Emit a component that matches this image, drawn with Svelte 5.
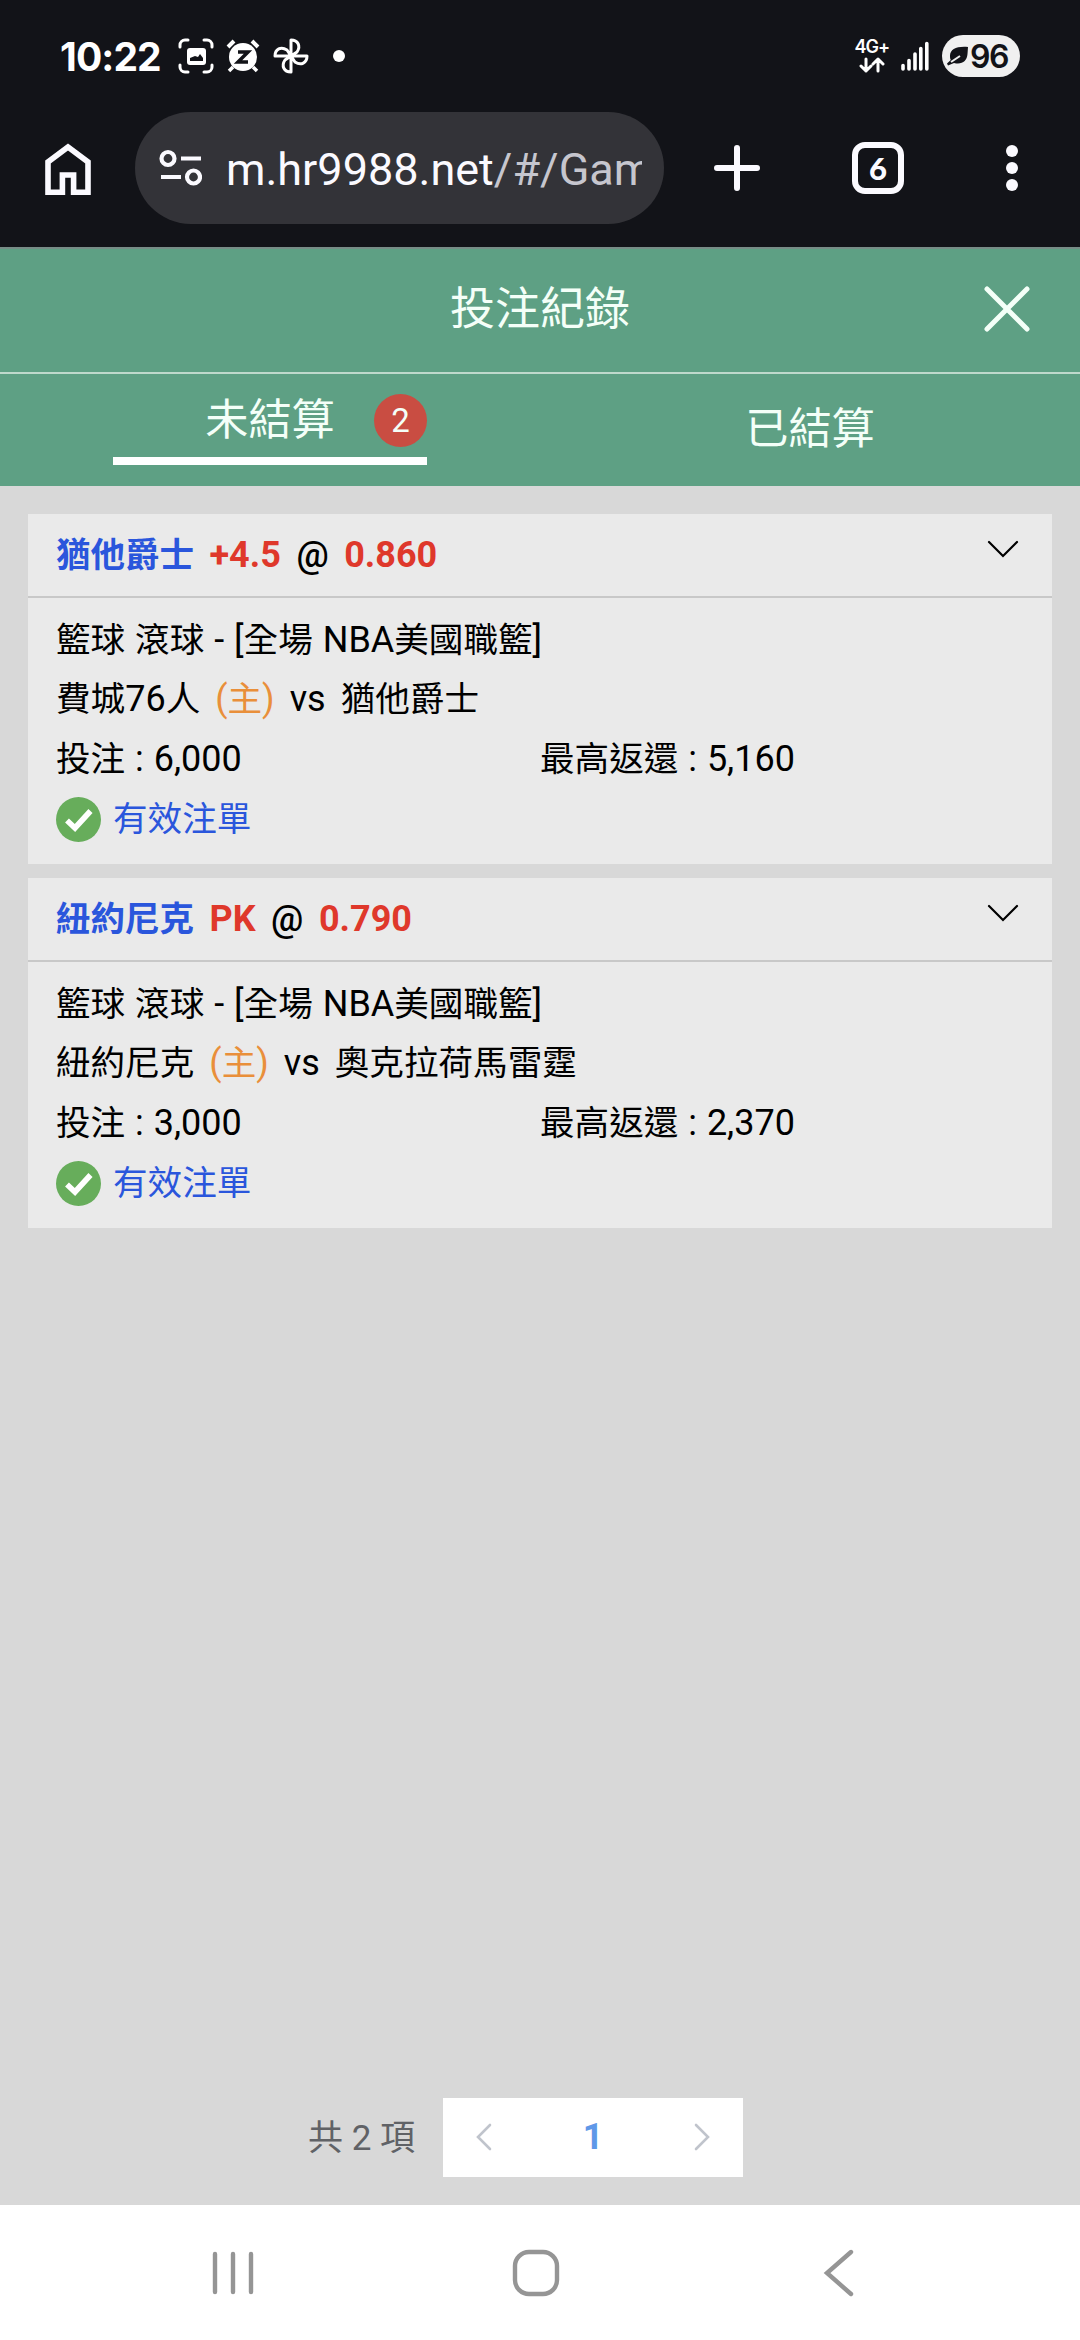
<script lang="ts">
interface Bet {
  id: number;
  pick: string;
  handicap: string;
  odds: string;
  category: string;
  home: string;
  away: string;
  stake: number;
  maxReturn: number;
}

const bets: Bet[] = [
  {
    id: 1,
    pick: '猶他爵士',
    handicap: '+4.5',
    odds: '0.860',
    category: '籃球 滾球 - [全場 NBA美國職籃]',
    home: '費城76人',
    away: '猶他爵士',
    stake: 6000,
    maxReturn: 5160,
  },
  {
    id: 2,
    pick: '紐約尼克',
    handicap: 'PK',
    odds: '0.790',
    category: '籃球 滾球 - [全場 NBA美國職籃]',
    home: '紐約尼克',
    away: '奧克拉荷馬雷霆',
    stake: 3000,
    maxReturn: 2370,
  },
];

let activeTab = $state('open');
let collapsed = $state<number[]>([]);

function toggle(id: number) {
  collapsed = collapsed.includes(id) ? collapsed.filter((c) => c !== id) : [...collapsed, id];
}

function money(value: number): string {
  return value.toLocaleString('en-US');
}

// Han and Latin runs are set at slightly different sizes
function runs(text: string): string[] {
  return text.match(/[\u4e00-\u9fff]+|[^\u4e00-\u9fff]+/g) ?? [];
}
</script>

{#snippet mixed(text: string)}
  <span class="mixed">{#each runs(text) as run}<span class:han={/[\u4e00-\u9fff]/.test(run)}>{run}</span>{/each}</span>
{/snippet}

<div class="screen">
  <div class="status-bar">
    <span class="clock">10:22</span>
    <svg class="capture" width="36" height="36" viewBox="0 0 36 36" fill="none" stroke="#fff" stroke-width="3" stroke-linecap="round">
      <path d="M2 9V7a5 5 0 0 1 5-5h3M26 2h3a5 5 0 0 1 5 5v2M34 27v2a5 5 0 0 1-5 5h-3M10 34H7a5 5 0 0 1-5-5v-2" />
      <rect x="9" y="10" width="19" height="17" rx="3" fill="#fff" stroke="none" />
      <path d="M12 23v-3l5-2 3 1 2-3 3 4v3z" fill="#121318" stroke="none" />
    </svg>
    <svg class="alarm" width="34" height="34" viewBox="0 0 34 34" fill="none" stroke="#fff">
      <circle cx="17" cy="18" r="14" fill="#fff" stroke="none" />
      <path d="M2 8l6-6M26 2l6 6" stroke-width="4" />
      <path d="M7 28l-4 4M27 28l4 4" stroke-width="3.5" />
      <path d="M12 13h10l-10 10h10" stroke="#121318" stroke-width="3.5" />
    </svg>
    <svg class="fan" width="36" height="36" viewBox="0 0 36 36" fill="none" stroke="#fff" stroke-width="3" stroke-linejoin="round">
      <path d="M18 18V2c7 0 10 6 6 12zM18 18h16c0 7-6 10-12 6zM18 18v16c-7 0-10-6-6-12zM18 18H2c0-7 6-10 12-6z" />
    </svg>
    <span class="more-dot"></span>
    <span class="spacer"></span>
    <div class="network">
      <span>4G+</span>
      <svg width="26" height="16" viewBox="0 0 26 16" fill="none" stroke="#fff" stroke-width="3" stroke-linecap="round" stroke-linejoin="round">
        <path d="M7 2v12M2 9l5 5 5-5M19 14V2M14 7l5-5 5 5" />
      </svg>
    </div>
    <svg class="signal" width="28" height="30" viewBox="0 0 28 30" stroke="#fff" stroke-width="3.6" stroke-linecap="round">
      <path d="M2 24.500v3.500M8 19.500v8.500M14 13v15M19.800 7.500v20.500M25.800 2.500v25.500" />
    </svg>
    <div class="battery">
      <svg width="23" height="20" viewBox="0 0 23 20">
        <path d="M22 1C11 0 4 3 4 10c0 2 .3 3 .8 4L1 17.500l1 2 6-2.500c8 2 13-2 13.500-9z" fill="#121318" />
        <path d="M5 16l9-6" stroke="#f0f0f0" stroke-width="2" />
      </svg>
      <span>96</span>
    </div>
  </div>

  <div class="browser-bar">
    <svg class="home" width="46" height="52" viewBox="0 0 46 52" fill="none" stroke="#fbfaff" stroke-width="5.600">
      <path d="M3 49.200V19L23 4l20 15v30.200H28.600V32H17.400v17.200z" />
    </svg>
    <div class="address">
      <svg width="43" height="38" viewBox="0 0 43 38" fill="none" stroke="#fbfaff" stroke-width="4.200">
        <circle cx="9" cy="9.500" r="6.500" />
        <circle cx="34.500" cy="28" r="6.500" />
        <path d="M22 9.500h20M2 28h20" />
      </svg>
      <div class="url">m.hr9988.net<span>/#/Gam</span></div>
    </div>
    <svg class="plus" width="46" height="46" viewBox="0 0 46 46" stroke="#fbfaff" stroke-width="6" stroke-linecap="round">
      <path d="M23 3v40M3 23h40" />
    </svg>
    <div class="tab-count">6</div>
    <svg class="menu" width="12" height="48" viewBox="0 0 12 48" fill="#fbfaff">
      <circle cx="6" cy="7" r="6" />
      <circle cx="6" cy="24" r="6" />
      <circle cx="6" cy="41" r="6" />
    </svg>
  </div>

  <header class="title-bar">
    <h1>投注紀錄</h1>
    <button class="close" aria-label="close">
      <svg width="46" height="46" viewBox="0 0 46 46" stroke="#f4fff8" stroke-width="5" stroke-linecap="round">
        <path d="M3 3l40 40M43 3L3 43" />
      </svg>
    </button>
  </header>

  <nav class="tabs">
    <button class="tab" class:active={activeTab === 'open'} onclick={() => (activeTab = 'open')}>
      <span class="label">未結算<span class="badge">{bets.length}</span></span>
    </button>
    <button class="tab" class:active={activeTab === 'settled'} onclick={() => (activeTab = 'settled')}>
      <span class="label">已結算</span>
    </button>
  </nav>

  <main>
    {#each bets as bet (bet.id)}
      <section class="card">
        <button class="card-head" onclick={() => toggle(bet.id)}>
          <span class="pick">{bet.pick}</span>
          <span class="red">{bet.handicap}</span>
          <span class="at">@</span>
          <span class="red">{bet.odds}</span>
          <svg width="32" height="18" viewBox="0 0 32 18" fill="none" stroke="#000" stroke-width="2.200" stroke-linecap="round">
            <path d="M2 2l14 14L30 2" />
          </svg>
        </button>
        {#if !collapsed.includes(bet.id)}
          <div class="card-body">
            <div class="row">{@render mixed(bet.category)}</div>
            <div class="row teams">
              {@render mixed(bet.home)}
              <span class="host">{@render mixed('(主)')}</span>
              {@render mixed('vs')}
              {@render mixed(bet.away)}
            </div>
            <div class="row amounts">
              {@render mixed(`投注 : ${money(bet.stake)}`)}
              {@render mixed(`最高返還 : ${money(bet.maxReturn)}`)}
            </div>
            <div class="row valid">
              <svg width="45" height="45" viewBox="0 0 45 45" fill="none">
                <circle cx="22.500" cy="22.500" r="22.500" fill="#67ad5b" />
                <path d="M11 23.500l8 7.500 15.500-17" stroke="#fff" stroke-width="5.600" />
              </svg>
              {@render mixed('有效注單')}
            </div>
          </div>
        {/if}
      </section>
    {/each}
  </main>

  <footer class="pagination">
    <span class="total">共 {bets.length} 項</span>
    <div class="pager">
      <svg width="16" height="28" viewBox="0 0 16 28"><path d="M14 2L2 14l12 12" /></svg>
      <span>1</span>
      <svg width="16" height="28" viewBox="0 0 16 28"><path d="M2 2l12 12L2 26" /></svg>
    </div>
  </footer>

  <div class="system-nav">
    <svg width="42" height="46" viewBox="0 0 42 46"><path d="M3 4v38M21 4v38M39 4v38" /></svg>
    <svg width="48" height="48" viewBox="0 0 48 48"><rect x="3" y="3" width="42" height="42" rx="14" /></svg>
    <svg width="36" height="48" viewBox="0 0 36 48"><path d="M33 3L9 24l24 21" /></svg>
  </div>
</div>

<style>
  :global(body) {
    background: #d8d8d8;
  }

  .screen {
    display: flex;
    flex-direction: column;
    width: 1080px;
    height: 2340px;
    overflow: hidden;
    background: #d8d8d8;
    color: #000;
    font-family: Roboto, 'Noto Sans CJK TC', sans-serif;
    font-size: 36px;
  }

  svg {
    display: block;
    flex: none;
  }

  button {
    padding: 0;
    border: none;
    background: none;
    color: inherit;
    font: inherit;
    cursor: pointer;
  }

  .status-bar {
    display: flex;
    align-items: center;
    height: 112px;
    padding: 0 60px;
    background: #121318;
    color: #fff;
    box-sizing: border-box;
  }

  .clock {
    width: 118px;
    font-family: Inter, sans-serif;
    font-size: 39px;
    font-weight: 700;
    letter-spacing: -0.9px;
    white-space: nowrap;
  }

  .alarm {
    margin-left: 12px;
  }

  .fan {
    margin-left: 13px;
  }

  .more-dot {
    width: 12px;
    height: 12px;
    margin-left: 24px;
    border-radius: 50%;
    background: #fff;
  }

  .spacer {
    flex: 1;
  }

  .network {
    display: flex;
    flex-direction: column;
    align-items: center;
    gap: 2px;
    margin-right: 12px;
    font-family: Inter, sans-serif;
    font-size: 18px;
    font-weight: 600;
    line-height: 16px;
    letter-spacing: -1px;
  }

  .battery {
    display: flex;
    align-items: center;
    gap: 1px;
    width: 78px;
    height: 42px;
    margin-left: 13px;
    padding-left: 4px;
    border-radius: 21px;
    background: #f0f0f0;
    color: #121318;
    font-family: Inter, sans-serif;
    font-size: 32px;
    font-weight: 600;
    letter-spacing: -1.5px;
    box-sizing: border-box;
  }

  .browser-bar {
    display: flex;
    align-items: flex-start;
    height: 135px;
    padding-left: 45px;
    background: #121318;
    box-sizing: border-box;
  }

  .home {
    margin-top: 31px;
  }

  .address {
    display: flex;
    align-items: center;
    width: 529px;
    height: 112px;
    margin-left: 44px;
    padding: 0 22px 0 24px;
    border-radius: 56px;
    background: #333338;
    box-sizing: border-box;
  }

  .url {
    flex: 1;
    margin-left: 24px;
    padding-top: 3px;
    overflow: hidden;
    color: #fbfaff;
    font-size: 45px;
    line-height: 60px;
    white-space: nowrap;
  }

  .url span {
    color: #c6c6ce;
  }

  .plus {
    margin: 33px 0 0 50px;
  }

  .tab-count {
    width: 52px;
    height: 52px;
    margin: 30px 0 0 92px;
    border: 6px solid #fbfaff;
    border-radius: 13px;
    color: #fbfaff;
    font-family: Lato, sans-serif;
    font-size: 31px;
    font-weight: 900;
    line-height: 40px;
    text-align: center;
    box-sizing: border-box;
  }

  .menu {
    margin: 32px 0 0 102px;
  }

  .title-bar {
    display: grid;
    grid-template-columns: 1fr auto 1fr;
    align-items: center;
    height: 127px;
    padding: 0 50px 4px;
    border-top: 2px solid #778c86;
    border-bottom: 2px solid #bfd9cc;
    background: #5ea084;
    color: #f4fff8;
    box-sizing: border-box;
  }

  h1 {
    grid-column: 2;
    margin: 0;
    padding-bottom: 6px;
    font-size: 45px;
    font-weight: 400;
  }

  .close {
    justify-self: end;
  }

  .tabs {
    display: flex;
    height: 112px;
    background: #5ea084;
    color: #f4fff8;
  }

  .tab {
    display: flex;
    flex: 1;
    align-items: center;
    justify-content: center;
    font-size: 43.2px;
  }

  .label {
    position: relative;
    width: 314px;
    line-height: 64px;
  }

  .active .label {
    margin-bottom: 6px;
    padding-bottom: 4px;
    border-bottom: 8px solid #fff;
  }

  .badge {
    position: absolute;
    top: 5px;
    right: 0;
    width: 53px;
    height: 53px;
    border-radius: 50%;
    background: #c94d42;
    font-size: 33px;
    line-height: 53px;
  }

  main {
    display: flex;
    flex: 1;
    flex-direction: column;
    gap: 14px;
    padding: 28px;
  }

  .card {
    background: #eaeaea;
  }

  .card-head {
    display: flex;
    align-items: center;
    gap: 15.5px;
    width: 100%;
    height: 84px;
    padding: 0 33px 1px 28px;
    border-bottom: 2px solid #c8c8c8;
    box-sizing: border-box;
  }

  .card-head svg {
    margin: -11px 0 0 auto;
  }

  .pick {
    padding-bottom: 5px;
    color: #2a56dc;
    font-size: 34.5px;
    font-weight: 700;
  }

  .red {
    color: #df382b;
    font-weight: 700;
  }

  .at {
    font-weight: 500;
  }

  .card-body {
    height: 266px;
    padding: 13px 28px 0;
    box-sizing: border-box;
  }

  .row {
    display: flex;
    align-items: center;
    height: 59.3px;
    line-height: 53px;
  }

  .mixed {
    white-space: pre;
    word-spacing: 1px;
  }

  .han {
    font-size: 34.6px;
  }

  .teams {
    gap: 15px;
  }

  .host {
    color: #e98f3a;
  }

  .amounts .mixed {
    flex: 1;
  }

  .valid {
    gap: 12px;
    height: 62px;
    color: #2a56dc;
  }

  .pagination {
    display: flex;
    align-items: center;
    height: 107px;
    padding: 0 0 28px 308px;
    box-sizing: border-box;
  }

  .total {
    width: 135px;
    padding-bottom: 6px;
    color: #606266;
    font-size: 35px;
    white-space: nowrap;
  }

  .pager {
    display: flex;
    align-items: center;
    justify-content: space-between;
    width: 300px;
    height: 79px;
    padding: 0 33px 2px;
    background: #fff;
    color: #5f98e8;
    font-weight: 700;
    box-sizing: border-box;
  }

  .pager svg {
    fill: none;
    stroke: #c0c4cc;
    stroke-width: 2.6;
    stroke-linecap: round;
  }

  .system-nav {
    display: flex;
    align-items: center;
    justify-content: space-between;
    height: 135px;
    padding: 0 226px 0 212px;
    background: #fff;
    box-sizing: border-box;
  }

  .system-nav svg {
    fill: none;
    stroke: #959595;
    stroke-width: 4.4;
    stroke-linecap: round;
  }
</style>
